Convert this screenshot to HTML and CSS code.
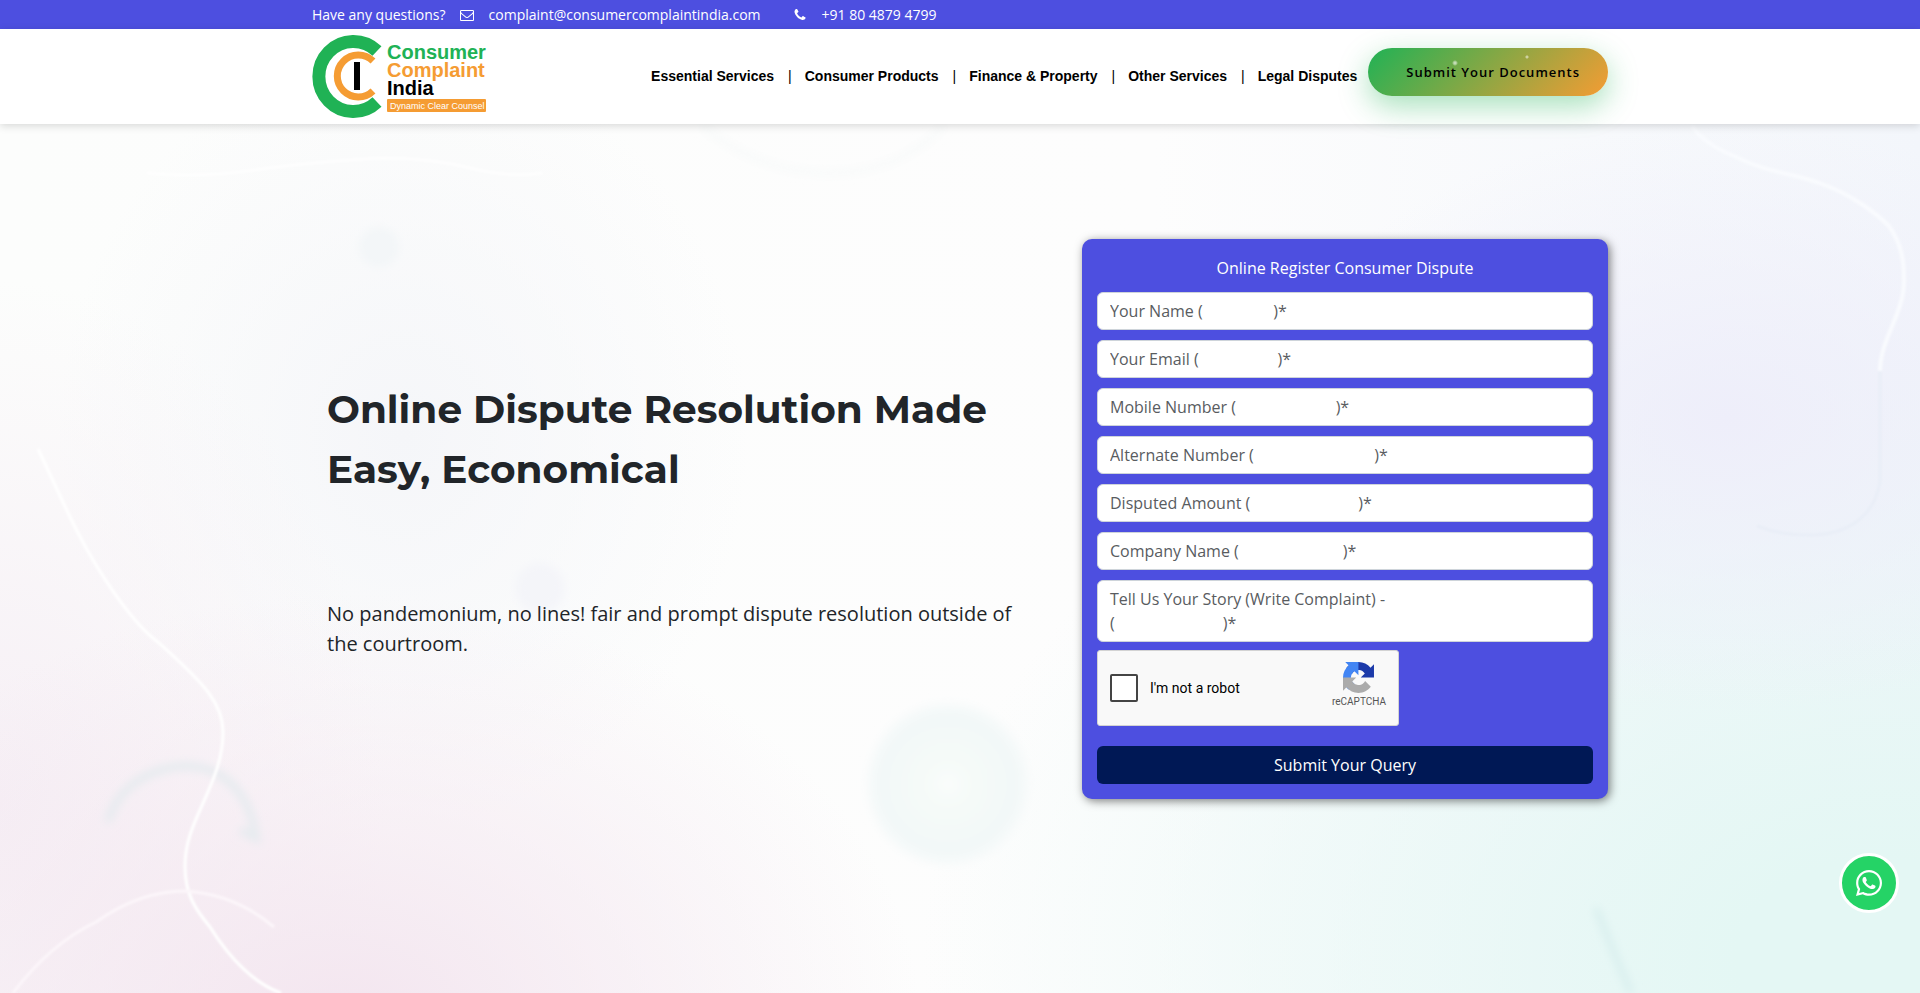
FILE: index.html
```html
<!DOCTYPE html>
<html lang="en">

<head>
    <meta charset="UTF-8" />
    <meta name="viewport" content="width=device-width, initial-scale=1" />
    <title>Consumer Complaint India</title>
    <link rel="stylesheet" href="styles.css">
</head>

<body>
    <!-- Top bar -->
    <div class="topbar">
        <div class="container topbar-inner">
            <span>Have any questions?</span>
            <a class="topbar-mail" href="mailto:complaint@consumercomplaintindia.com">
                <svg width="14" height="14" viewBox="0 0 1792 1792" fill="currentColor" aria-hidden="true"><path d="M1664 1504v-768q-32 36-69 66-268 206-426 338-51 43-83 67t-86.500 48.500-102.500 24.500h-2q-48 0-102.500-24.500t-86.500-48.500-83-67q-158-132-426-338-37-30-69-66v768q0 13 9.500 22.500t22.500 9.500h1472q13 0 22.500-9.500t9.500-22.500zm0-1051v-24.500l-.5-13-3-12.500-5.500-9-9-7.500-14-2.500h-1472q-13 0-22.500 9.500t-9.500 22.500q0 168 147 284 193 152 401 317 6 5 35 29.500t46 37.500 44.500 31.500 50.500 27.500 43 9h2q20 0 43-9t50.500-27.500 44.500-31.500 46-37.500 35-29.500q208-165 401-317 54-43 100.500-115.500t46.500-131.500zm128-37v1088q0 66-47 113t-113 47h-1472q-66 0-113-47t-47-113v-1088q0-66 47-113t113-47h1472q66 0 113 47t47 113z"/></svg>
                <span>complaint@consumercomplaintindia.com</span>
            </a>
            <a class="topbar-phone" href="tel:+918048794799">
                <svg width="14" height="14" viewBox="0 0 1792 1792" fill="currentColor" aria-hidden="true"><path d="M1600 1240q0 27-10 70.500t-21 68.500q-21 50-122 106-94 51-186 51-27 0-53-3.500t-57.500-12.500-47-14.500-55.500-20.500-49-18q-98-35-175-83-127-79-264-216t-216-264q-48-77-83-175-3-9-18-49t-20.500-55.500-14.500-47-12.500-57.500-3.500-53q0-92 51-186 56-101 106-122 25-11 68.500-21t70.500-10q14 0 21 3 18 6 53 76 11 19 30 54t35 63.500 31 53.500q3 4 17.500 25t21.500 35.500 7 28.500q0 20-28.500 50t-62 55-62 53-28.500 46q0 9 5 22.500t8.500 20.500 14 24 11.500 19q76 137 174 235t235 174q2 1 19 11.500t24 14 20.500 8.500 22.500 5q18 0 46-28.500t53-62 55-62 50-28.500q14 0 28.500 7t35.500 21.500 25 17.500q25 15 53.500 31t63.500 35 54 30q70 35 76 53 3 7 3 21z"/></svg>
                <span>+91 80 4879 4799</span>
            </a>
        </div>
    </div>

    <!-- Header -->
    <header class="header">
        <div class="container header-inner">
            <a class="logo" href="#" aria-label="Consumer Complaint India">
                <svg width="176" height="86" viewBox="0 0 176 86">
                    <path d="M65 18A34.500 35 0 1 0 65 69" fill="none" stroke="#20b255" stroke-width="13" />
                    <path d="M61 28A21 21 0 1 0 61 58" fill="none" stroke="#f59c33" stroke-width="7" />
                    <rect x="42" y="29" width="6" height="28" fill="#000" />
                    <text class="logo-word" x="75" y="26" fill="#20b255">Consumer</text>
                    <text class="logo-word" x="75" y="44" fill="#f59c33">Complaint</text>
                    <text class="logo-word" x="75" y="62" fill="#000">India</text>
                    <rect x="75" y="66" width="99" height="13" rx="1" fill="#f59c33" />
                    <text class="logo-tag" x="78" y="76" fill="#fff">Dynamic Clear Counsel</text>
                </svg>
            </a>
            <nav>
                <ul class="menu">
                    <li><a href="#">Essential Services</a></li>
                    <li><a href="#">Consumer Products</a></li>
                    <li><a href="#">Finance &amp; Property</a></li>
                    <li><a href="#">Other Services</a></li>
                    <li><a href="#">Legal Disputes</a></li>
                </ul>
            </nav>
            <a class="btn-docs" href="#">Submit Your Documents</a>
        </div>
    </header>

    <!-- Hero -->
    <main class="hero">
        <svg class="hero-bg" viewBox="0 0 1920 869" preserveAspectRatio="xMidYMin slice" aria-hidden="true">
            <defs>
                <filter id="soft" x="-20%" y="-20%" width="140%" height="140%"><feGaussianBlur stdDeviation="4" /></filter>
                <filter id="line" x="-20%" y="-20%" width="140%" height="140%"><feGaussianBlur stdDeviation="1" /></filter>
                <radialGradient id="orb">
                    <stop offset="0" stop-color="#fafdfb" />
                    <stop offset="0.3" stop-color="#f5faf8" />
                    <stop offset="0.85" stop-color="#f2f8f8" />
                    <stop offset="1" stop-color="#f9fbfb" />
                </radialGradient>
            </defs>
            <g filter="url(#soft)">
                <circle cx="379" cy="123" r="20" fill="#f3f6f8" />
                <circle cx="540" cy="464" r="25" fill="#f4f5f9" />
                <circle cx="948" cy="660" r="82" fill="url(#orb)" />
                <path d="M108 698C118 660 155 642 188 642C232 644 252 680 256 714L240 706" fill="none" stroke="#e6ebef" stroke-width="8" />
                <path d="M1596 784Q1612 825 1631 869" fill="none" stroke="#d9efee" stroke-width="7" />
                <path d="M702 2Q760 49 829 49T944 2" fill="none" stroke="#f7f9f9" stroke-width="5" />
            </g>
            <g fill="none" filter="url(#line)">
                <path d="M38 325C62 375 74 405 96 441C120 480 140 505 159 519C205 560 223 580 223 608C223 625 219 640 214 653C200 690 185 710 185 742C185 770 195 785 210 803C230 835 255 860 281 869" stroke="#fff" stroke-width="3" />
                <path d="M13 869Q50 820 96 798Q140 767 185 767Q235 770 274 803" stroke="#fcf6fa" stroke-width="3" />
                <path d="M147 49Q200 54 255 46T383 34Q430 34 470 44T542 49" stroke="#fff" stroke-width="2" />
                <path d="M1692 2Q1704 20 1734 32C1770 50 1790 48 1822 60C1850 70 1875 88 1889 102C1903 122 1904 140 1904 157C1904 190 1880 215 1880 247" stroke="#f9fbfe" stroke-width="4" />
                <path d="M1880 247L1880 358C1875 390 1850 411 1810 411Q1780 411 1757 402" stroke="#e9eef7" stroke-width="3" />
            </g>
        </svg>

        <div class="container hero-row">
            <div class="hero-text">
                <h1>Online Dispute Resolution Made Easy, Economical</h1>
                <p>No pandemonium, no lines! fair and prompt dispute resolution outside of the courtroom.</p>
            </div>

            <form class="query-form">
                <h2>Online Register Consumer Dispute</h2>
                <input type="text" aria-label="Your Name" placeholder="Your Name (&nbsp;&nbsp;&nbsp;&nbsp;&nbsp;&nbsp;&nbsp;&nbsp;&nbsp;&nbsp;&nbsp;&nbsp;&nbsp;&nbsp;&nbsp;&nbsp;&nbsp;)*" />
                <input type="email" aria-label="Your Email" placeholder="Your Email (&nbsp;&nbsp;&nbsp;&nbsp;&nbsp;&nbsp;&nbsp;&nbsp;&nbsp;&nbsp;&nbsp;&nbsp;&nbsp;&nbsp;&nbsp;&nbsp;&nbsp;&nbsp;&nbsp;)*" />
                <input type="tel" aria-label="Mobile Number" placeholder="Mobile Number (&nbsp;&nbsp;&nbsp;&nbsp;&nbsp;&nbsp;&nbsp;&nbsp;&nbsp;&nbsp;&nbsp;&nbsp;&nbsp;&nbsp;&nbsp;&nbsp;&nbsp;&nbsp;&nbsp;&nbsp;&nbsp;&nbsp;&nbsp;&nbsp;)*" />
                <input type="tel" aria-label="Alternate Number" placeholder="Alternate Number (&nbsp;&nbsp;&nbsp;&nbsp;&nbsp;&nbsp;&nbsp;&nbsp;&nbsp;&nbsp;&nbsp;&nbsp;&nbsp;&nbsp;&nbsp;&nbsp;&nbsp;&nbsp;&nbsp;&nbsp;&nbsp;&nbsp;&nbsp;&nbsp;&nbsp;&nbsp;&nbsp;&nbsp;&nbsp;)*" />
                <input type="text" aria-label="Disputed Amount" placeholder="Disputed Amount (&nbsp;&nbsp;&nbsp;&nbsp;&nbsp;&nbsp;&nbsp;&nbsp;&nbsp;&nbsp;&nbsp;&nbsp;&nbsp;&nbsp;&nbsp;&nbsp;&nbsp;&nbsp;&nbsp;&nbsp;&nbsp;&nbsp;&nbsp;&nbsp;&nbsp;&nbsp;)*" />
                <input type="text" aria-label="Company Name" placeholder="Company Name (&nbsp;&nbsp;&nbsp;&nbsp;&nbsp;&nbsp;&nbsp;&nbsp;&nbsp;&nbsp;&nbsp;&nbsp;&nbsp;&nbsp;&nbsp;&nbsp;&nbsp;&nbsp;&nbsp;&nbsp;&nbsp;&nbsp;&nbsp;&nbsp;&nbsp;)*" />
                <textarea rows="2" aria-label="Tell Us Your Story" placeholder="Tell Us Your Story (Write Complaint) -&#10;(&nbsp;&nbsp;&nbsp;&nbsp;&nbsp;&nbsp;&nbsp;&nbsp;&nbsp;&nbsp;&nbsp;&nbsp;&nbsp;&nbsp;&nbsp;&nbsp;&nbsp;&nbsp;&nbsp;&nbsp;&nbsp;&nbsp;&nbsp;&nbsp;&nbsp;&nbsp;)*"></textarea>

                <div class="captcha">
                    <input type="checkbox" id="robot" />
                    <label for="robot">I'm not a robot</label>
                    <div class="captcha-brand">
                        <svg width="31" height="31" viewBox="0 0 64 64" aria-hidden="true">
                            <path fill="#1c3aa9" d="M64 31.955l-.033-1.370V4.687l-7.160 7.160C50.948 4.674 42.033.093 32.050.093c-10.400 0-19.622 4.960-25.458 12.640l11.736 11.860a15.550 15.550 0 0 1 4.754-5.334c2.050-1.600 4.952-2.906 8.968-2.906.485 0 .860.057 1.135.163 4.976.393 9.288 3.140 11.828 7.124l-8.307 8.307L64 31.953" />
                            <path fill="#4285f4" d="M31.862.094l-1.370.033H4.594l7.160 7.160C4.580 13.147 0 22.060 0 32.046c0 10.400 4.960 19.622 12.640 25.458L24.500 45.768a15.550 15.550 0 0 1-5.334-4.754c-1.600-2.050-2.906-4.952-2.906-8.968 0-.485.057-.860.163-1.135.393-4.976 3.140-9.288 7.124-11.828l8.307 8.307L31.860.095" />
                            <path fill="#ababab" d="M.001 32.045l.033 1.370v25.898l7.160-7.160c5.860 7.173 14.774 11.754 24.760 11.754 10.400 0 19.622-4.960 25.458-12.640l-11.736-11.860a15.550 15.550 0 0 1-4.754 5.334c-2.050 1.600-4.952 2.906-8.968 2.906-.485 0-.860-.057-1.135-.163-4.976-.393-9.288-3.140-11.828-7.124l8.307-8.307c-10.522.040-22.400.066-27.295-.005" />
                        </svg>
                        <span>reCAPTCHA</span>
                    </div>
                </div>

                <button type="submit">Submit Your Query</button>
            </form>
        </div>
    </main>

    <a class="whatsapp" href="#" aria-label="WhatsApp">
        <svg width="26" height="30" viewBox="0 0 448 512" fill="currentColor"><path d="M380.900 97.100C339 55.100 283.200 32 223.900 32c-122.400 0-222 99.600-222 222 0 39.100 10.200 77.300 29.600 111L0 480l117.700-30.900c32.400 17.700 68.900 27 106.100 27h.1c122.300 0 224.100-99.600 224.100-222 0-59.300-25.200-115-67.100-157zm-157 341.600c-33.200 0-65.700-8.900-94-25.700l-6.700-4-69.800 18.300L72 359.200l-4.400-7c-18.500-29.400-28.200-63.300-28.200-98.200 0-101.700 82.800-184.500 184.600-184.500 49.300 0 95.600 19.200 130.400 54.100 34.800 34.900 56.200 81.200 56.100 130.500 0 101.800-84.900 184.600-186.600 184.600zM325.100 300.500c-5.500-2.800-32.800-16.200-37.900-18-5.100-1.900-8.800-2.800-12.500 2.800-3.700 5.600-14.300 18-17.600 21.800-3.200 3.700-6.500 4.200-12 1.400-32.600-16.300-54-29.100-75.500-66-5.700-9.800 5.700-9.100 16.300-30.300 1.800-3.700.9-6.900-.5-9.700-1.400-2.800-12.500-30.100-17.100-41.200-4.500-10.800-9.100-9.300-12.500-9.500-3.200-.2-6.900-.2-10.600-.2-3.700 0-9.700 1.400-14.800 6.900-5.100 5.600-19.400 19-19.400 46.300 0 27.300 19.900 53.700 22.600 57.400 2.800 3.700 39.100 59.700 94.800 83.800 35.200 15.200 49 16.500 66.600 13.900 10.700-1.600 32.800-13.400 37.400-26.400 4.600-13 4.600-24.100 3.200-26.400-1.300-2.500-5-3.900-10.500-6.600z"/></svg>
    </a>
</body>

</html>
```
FILE: styles.css
```css
* {
    box-sizing: border-box;
}

body {
    margin: 0;
    font-family: "Open Sans", sans-serif;
    font-size: 16px;
    line-height: 24px;
    color: #212529;
    min-height: 100vh;
    display: flex;
    flex-direction: column;
}

a {
    color: inherit;
    text-decoration: none;
}

.container {
    width: 100%;
    max-width: 1320px;
    margin: 0 auto;
    padding: 0 12px;
}

/* top bar */
.topbar {
    background: #4d4fe0;
    color: #fff;
    font-size: 14px;
    padding: 3px 0 2px;
}

.topbar-inner,
.topbar-mail,
.topbar-phone {
    display: flex;
    align-items: center;
}

.topbar-mail,
.topbar-phone {
    gap: 15px;
}

.topbar-mail {
    margin: 0 32px 0 14px;
}

/* header */
.header {
    position: relative;
    z-index: 2;
    background: #fff;
    box-shadow: 0 2px 8px rgba(0, 0, 0, 0.15);
}

.header-inner {
    display: flex;
    align-items: center;
    min-height: 95px;
    padding-bottom: 2px;
}

.logo {
    margin-right: auto;
}

.logo svg {
    display: block;
    overflow: visible;
}

.logo-word {
    font-family: "Liberation Sans", Arial, sans-serif;
    font-size: 20px;
    font-weight: 700;
}

.logo-tag {
    font-family: "Liberation Sans", Arial, sans-serif;
    font-size: 9px;
}

.menu {
    display: flex;
    list-style: none;
    margin: 0;
    padding: 0;
    font-family: "Liberation Sans", Arial, sans-serif;
    font-size: 14px;
    color: #000;
}

.menu a {
    font-weight: 700;
}

.menu li + li::before {
    content: "|";
    margin: 0 13px 0 14px;
}

.btn-docs {
    margin: 0 0 8px 11px;
    padding: 12px 28px 12px 38px;
    border-radius: 24px;
    background:
        radial-gradient(circle at 87px 15px, rgba(255, 255, 255, 0.6) 1px, transparent 3px),
        radial-gradient(circle at 159px 9px, rgba(255, 255, 255, 0.5) 1px, transparent 2px),
        linear-gradient(135deg, #20b255, #f59c33);
    box-shadow: 0 10px 30px rgba(32, 178, 85, 0.4);
    color: #000;
    font-size: 13px;
    font-weight: 600;
    letter-spacing: 1px;
    white-space: nowrap;
}

/* hero */
.hero {
    position: relative;
    flex: 1;
    padding: 115px 0;
    overflow: hidden;
    background:
        radial-gradient(ellipse 24% 34% at 90% 34%, #eeeefa, transparent),
        radial-gradient(ellipse 50% 75% at 98% 96%, #e4f7f4 15%, transparent),
        radial-gradient(ellipse 30% 50% at 18% 104%, #f3e5ef, transparent),
        radial-gradient(ellipse 20% 60% at 0 78%, #f6eff5, transparent),
        radial-gradient(ellipse 18% 45% at 21% 36%, #f5f6f9, transparent),
        linear-gradient(90deg, #fcfdfc 0, #fdfdfd 60%, #f3f6fb 100%);
}

.hero-bg {
    position: absolute;
    inset: 0;
    width: 100%;
    height: 100%;
}

.hero-row {
    position: relative;
    display: grid;
    grid-template-columns: 7fr 5fr;
    align-items: center;
    padding: 0;
}

.hero-text {
    padding: 0 27px;
}

.hero-text h1 {
    margin: 0 0 100px;
    font-family: Montserrat, "Open Sans", sans-serif;
    font-size: 39px;
    font-weight: 700;
    line-height: 60px;
}

.hero-text p {
    margin: 0;
    font-size: 20px;
    line-height: 30px;
}

/* form */
.query-form {
    margin: 0 12px;
    padding: 15px;
    border-radius: 10px;
    background: #4d4fe0;
    box-shadow: 2px 2px 10px rgba(0, 0, 0, 0.5);
    color: #fff;
}

.query-form h2 {
    margin: 2px 0 12px;
    font-size: 16px;
    font-weight: 400;
    line-height: 24px;
    text-align: center;
}

.query-form input:not([type="checkbox"]),
.query-form textarea {
    display: block;
    width: 100%;
    margin: 0 0 10px;
    padding: 6px 12px;
    border: 1px solid #ced4da;
    border-radius: 6px;
    background: #fff;
    color: #212529;
    font: inherit;
}

.query-form textarea {
    height: 62px;
    margin-bottom: 8px;
    resize: none;
    overflow: hidden;
}

.query-form ::placeholder {
    color: #595c5f;
    opacity: 1;
}

.captcha {
    display: flex;
    align-items: center;
    max-width: 302px;
    height: 76px;
    padding: 0 12px;
    border: 1px solid #d3d3d3;
    border-radius: 3px;
    background: #f9f9f9;
    color: #000;
    font-family: Roboto, sans-serif;
    font-size: 14px;
}

.captcha input {
    appearance: none;
    width: 28px;
    height: 28px;
    margin: 0 12px 0 0;
    border: 2px solid #444;
    border-radius: 2px;
    background: #fff;
}

.captcha-brand {
    display: flex;
    flex-direction: column;
    align-items: center;
    margin-left: auto;
    padding-bottom: 3px;
    color: #555;
    font-size: 10px;
    line-height: 18px;
}

.query-form button {
    display: block;
    width: 100%;
    margin-top: 20px;
    padding: 7px 12px;
    border: 0;
    border-radius: 6px;
    background: #001855;
    color: #fff;
    font: inherit;
}

/* floating chat button */
.whatsapp {
    position: fixed;
    right: 21px;
    bottom: 80px;
    z-index: 3;
    display: flex;
    align-items: center;
    justify-content: center;
    width: 60px;
    height: 60px;
    border: 3px solid #fff;
    border-radius: 50%;
    background: #25d366;
    color: #fff;
}
```
